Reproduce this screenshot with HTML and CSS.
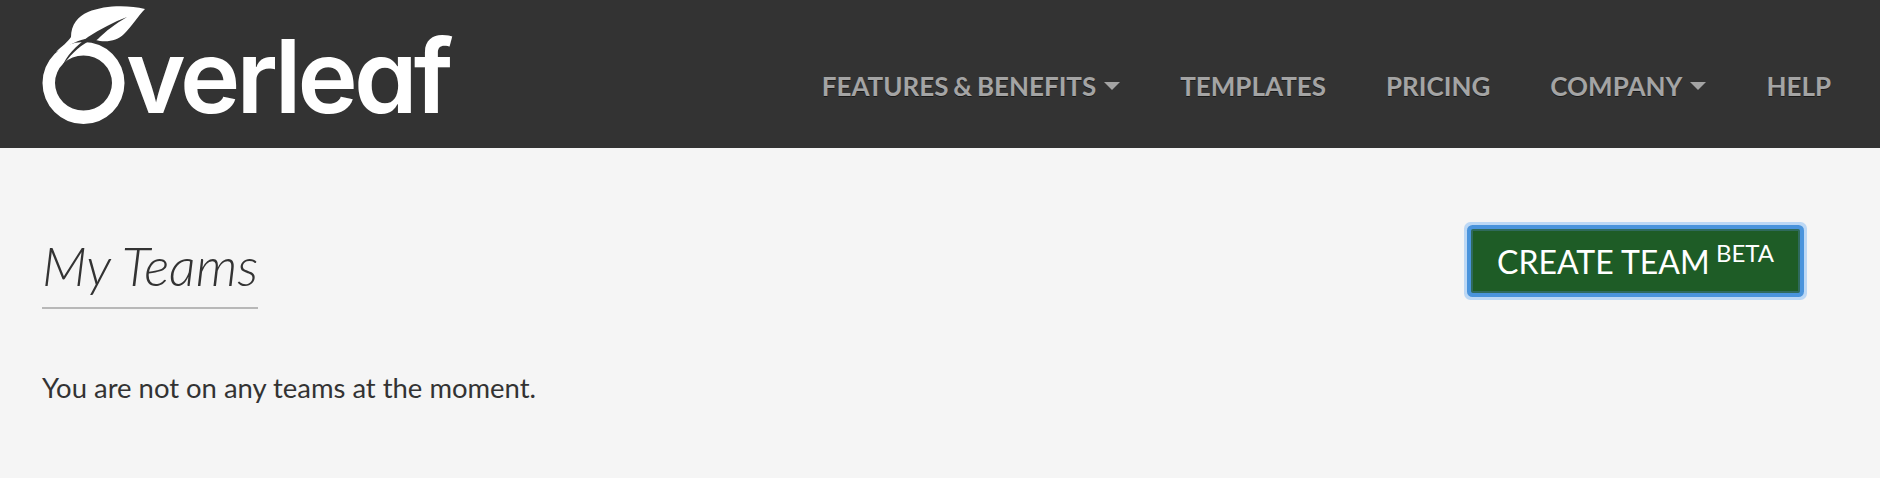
FILE: index.html
```html
<!DOCTYPE html>
<html lang="en">
<head>
  <meta charset="UTF-8" />
  <title>My Teams - Overleaf</title>
  <link rel="stylesheet" href="styles.css">
</head>
<body>

  <nav class="navbar">
    <a class="brand" href="#">
      <svg class="brand-mark" viewBox="0 0 150 130" width="150" height="130">
        <path fill="#fff" fill-rule="evenodd" d="M42.500 83a41 41 0 1 0 82 0a41 41 0 1 0-82 0zM55 83a28.500 27.500 0 1 0 57 0a28.500 27.500 0 1 0-57 0z"/>
        <path fill="#fff" d="M56 52C62 46 68 42 71 37C71 25 78 16 88 12C105 5 128 5 145 9C138 16 132 26 124 34C118 40 110 42 100 41C95 40 90 38 85 39C75 41 65 48 56 52z"/>
        <path fill="#333" d="M62 67C66 56 76 46 88 37C100 29 114 22 127 17C115 24 106 31 98 39C96 41 92 41 89 41C78 47 69 56 62 67z"/>
      </svg>
      <span class="brand-name">verleaf</span>
    </a>
    <ul class="nav-links">
      <li><a href="#">Features &amp; Benefits<span class="caret"></span></a></li>
      <li><a href="#">Templates</a></li>
      <li><a href="#">Pricing</a></li>
      <li><a href="#">Company<span class="caret"></span></a></li>
      <li><a href="#">Help</a></li>
    </ul>
  </nav>

  <main class="content">
    <div class="page-header">
      <h1 class="page-title">My Teams</h1>
      <a class="btn-create" href="#">Create Team <sup>Beta</sup></a>
    </div>
    <p class="empty-note">You are not on any teams at the moment.</p>
  </main>

</body>
</html>
```

FILE: styles.css
```css
body {
  margin: 0;
  background: #f5f5f5;
  color: #333;
  font-family: Lato, sans-serif;
}
a {
  text-decoration: none;
}
.navbar {
  height: 148px;
  background: #333;
  display: flex;
  justify-content: space-between;
  align-items: flex-start;
  padding: 0 49px 0 0;
}
.brand {
  display: flex;
  align-items: flex-start;
  color: #fff;
}
.brand-mark {
  flex: none;
  margin-right: -24px;
}
.brand-name {
  margin-top: 14px;
  font-family: Inter, sans-serif;
  font-size: 102px;
  line-height: 124px;
  font-weight: 600;
  font-feature-settings: "cv11";
  letter-spacing: -3.9px;
}
.nav-links {
  list-style: none;
  display: flex;
  gap: 60px;
  margin: 69px 0 0;
  padding: 0;
}
.nav-links a {
  display: flex;
  align-items: center;
  color: #a4a4a4;
  font-size: 26px;
  line-height: 34px;
  font-weight: 700;
  word-spacing: -1.5px;
  text-transform: uppercase;
  text-shadow: 0 1px 0 rgba(0,0,0,0.5);
}
.caret {
  width: 0;
  height: 0;
  margin-left: 8px;
  border-top: 8px solid #a4a4a4;
  border-left: 8px solid transparent;
  border-right: 8px solid transparent;
}
.content {
  padding: 0 80px 0 42px;
}
.page-header {
  display: flex;
  justify-content: space-between;
  align-items: flex-start;
  padding-top: 76px;
}
.page-title {
  margin: 4px 0 0;
  padding-bottom: 5px;
  border-bottom: 2px solid #b8b8b8;
  font-size: 53.3px;
  line-height: 74px;
  font-weight: 300;
  font-style: italic;
}
.btn-create {
  display: block;
  margin-top: 5px;
  padding: 8px 24px 7px;
  background: #1e5c26;
  color: #fff;
  font-size: 32px;
  line-height: 45px;
  text-transform: uppercase;
  border: 2px solid #2f6a5c;
  box-shadow: 0 0 0 4px #4a94dc, 0 0 0 7px #bcd8f5;
  border-radius: 2px;
}
.btn-create sup {
  margin-left: -2px;
  font-size: 24px;
  line-height: 0;
}
.empty-note {
  margin: 61px 0 0;
  font-size: 27.45px;
  line-height: 36px;
}
```
